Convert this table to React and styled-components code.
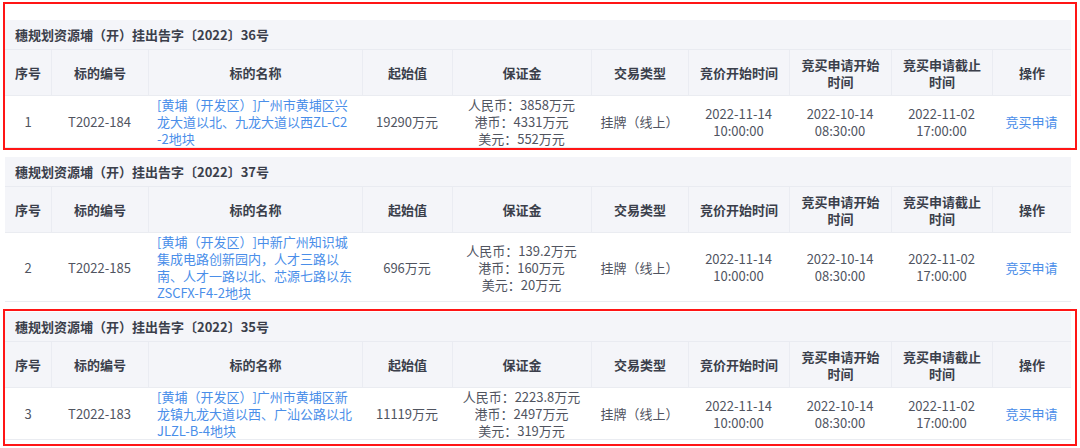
import React from 'react';
import styled, { createGlobalStyle } from 'styled-components';

const GlobalStyle = createGlobalStyle`
  html, body {
    margin: 0;
    padding: 0;
    background: #fff;
  }
  body {
    font-family: 'Noto Sans CJK SC', 'Noto Sans', sans-serif;
    font-size: 13px;
    color: #50545f;
    text-spacing-trim: space-all;
  }
`;

const COLS = '46px 97px 214px 90px 139px 97px 101px 102px 101px 79px';

const Page = styled.div`
  display: flex;
  flex-direction: column;
  gap: 5px;
  padding: 2px 0 0 3px;
  width: 1080px;
  box-sizing: border-box;
`;

const Frame = styled.section`
  width: 1074px;
  box-sizing: border-box;
  border: 2px solid ${(p) => (p.$marked ? '#ff1515' : 'transparent')};
  padding: ${(p) => p.$padTop}px 4px ${(p) => p.$padBottom}px 0;
`;

const Title = styled.div`
  height: 30px;
  box-sizing: border-box;
  display: flex;
  align-items: center;
  padding-left: 10px;
  background: #f4f5f9;
  border-bottom: 1px solid #e9ebf1;
  font-weight: 700;
  color: #3b3f4b;
`;

const Row = styled.div`
  display: grid;
  grid-template-columns: ${COLS};
  border-bottom: 1px solid #eaecf1;
  background: ${(p) => (p.$head ? '#f4f5f9' : '#fff')};
`;

const HeadCell = styled.div`
  height: 45px;
  display: flex;
  flex-direction: column;
  align-items: center;
  justify-content: center;
  line-height: 17px;
  font-weight: 700;
  color: #3b3f4b;
  border-left: ${(p) => (p.$first ? 'none' : '1px solid #eaecf2')};
`;

const Cell = styled.div`
  display: flex;
  flex-direction: column;
  align-items: ${(p) => (p.$left ? 'flex-start' : 'center')};
  justify-content: center;
  padding: 0 ${(p) => (p.$left ? '9px' : '0')};
  line-height: 17px;
  white-space: nowrap;
  color: ${(p) => (p.$link ? '#4a8ee9' : '#50545f')};
`;

const Line = styled.span`
  display: block;
`;

const headers = [
  ['序号'],
  ['标的编号'],
  ['标的名称'],
  ['起始值'],
  ['保证金'],
  ['交易类型'],
  ['竞价开始时间'],
  ['竞买申请开始', '时间'],
  ['竞买申请截止', '时间'],
  ['操作'],
];

const lots = [
  {
    title: '穗规划资源埔（开）挂出告字〔2022〕36号',
    marked: true,
    padTop: 16,
    padBottom: 0,
    no: '1',
    code: 'T2022-184',
    name: ['[黄埔（开发区）]广州市黄埔区兴', '龙大道以北、九龙大道以西ZL-C2', '-2地块'],
    start: '19290万元',
    deposit: ['人民币：3858万元', '港币：4331万元', '美元：552万元'],
  },
  {
    title: '穗规划资源埔（开）挂出告字〔2022〕37号',
    marked: false,
    padTop: 0,
    padBottom: 0,
    no: '2',
    code: 'T2022-185',
    name: [
      '[黄埔（开发区）]中新广州知识城',
      '集成电路创新园内，人才三路以',
      '南、人才一路以北、芯源七路以东',
      'ZSCFX-F4-2地块',
    ],
    start: '696万元',
    deposit: ['人民币：139.2万元', '港币：160万元', '美元：20万元'],
  },
  {
    title: '穗规划资源埔（开）挂出告字〔2022〕35号',
    marked: true,
    padTop: 1,
    padBottom: 4,
    no: '3',
    code: 'T2022-183',
    name: ['[黄埔（开发区）]广州市黄埔区新', '龙镇九龙大道以西、广汕公路以北', 'JLZL-B-4地块'],
    start: '11119万元',
    deposit: ['人民币：2223.8万元', '港币：2497万元', '美元：319万元'],
  },
];

const Lines = ({ items }) => items.map((t) => <Line key={t}>{t}</Line>);

function LotTable({ lot }) {
  return (
    <Frame $marked={lot.marked} $padTop={lot.padTop} $padBottom={lot.padBottom}>
      <Title>{lot.title}</Title>
      <Row $head>
        {headers.map((h, i) => (
          <HeadCell key={h.join('')} $first={i === 0}>
            <Lines items={h} />
          </HeadCell>
        ))}
      </Row>
      <Row>
        <Cell>{lot.no}</Cell>
        <Cell>{lot.code}</Cell>
        <Cell $left $link>
          <Lines items={lot.name} />
        </Cell>
        <Cell>{lot.start}</Cell>
        <Cell>
          <Lines items={lot.deposit} />
        </Cell>
        <Cell>挂牌（线上）</Cell>
        <Cell>
          <Lines items={['2022-11-14', '10:00:00']} />
        </Cell>
        <Cell>
          <Lines items={['2022-10-14', '08:30:00']} />
        </Cell>
        <Cell>
          <Lines items={['2022-11-02', '17:00:00']} />
        </Cell>
        <Cell $link>竞买申请</Cell>
      </Row>
    </Frame>
  );
}

export default function App() {
  return (
    <>
      <GlobalStyle />
      <Page>
        {lots.map((lot) => (
          <LotTable key={lot.code} lot={lot} />
        ))}
      </Page>
    </>
  );
}
